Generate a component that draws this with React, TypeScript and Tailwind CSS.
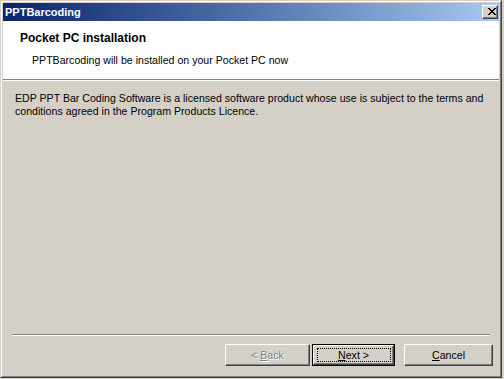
import React from "react";

const CloseGlyph = () => (
  <svg width="8" height="7" viewBox="0 0 8 7" shapeRendering="crispEdges">
    <g fill="#000">
      <rect x="0" y="0" width="2" height="1" />
      <rect x="6" y="0" width="2" height="1" />
      <rect x="1" y="1" width="2" height="1" />
      <rect x="5" y="1" width="2" height="1" />
      <rect x="2" y="2" width="4" height="1" />
      <rect x="3" y="3" width="2" height="1" />
      <rect x="2" y="4" width="4" height="1" />
      <rect x="1" y="5" width="2" height="1" />
      <rect x="5" y="5" width="2" height="1" />
      <rect x="0" y="6" width="2" height="1" />
      <rect x="6" y="6" width="2" height="1" />
    </g>
  </svg>
);

type BtnProps = {
  children: React.ReactNode;
  width: string;
  isDefault?: boolean;
  disabled?: boolean;
};

const Button = ({ children, width, isDefault, disabled }: BtnProps) => {
  const face = (
    <div className="flex-1 flex items-center justify-center border border-t-white border-l-white border-r-[#404040] border-b-[#404040] shadow-[inset_-1px_-1px_0_#808080] bg-[#d4d0c8]">
      <span
        className={`text-[10.6px] leading-[13px] ${
          disabled ? "text-[#808080] [text-shadow:1px_1px_0_#fff]" : "text-black"
        }`}
      >
        {children}
      </span>
    </div>
  );

  if (isDefault) {
    return (
      <div className={`${width} h-[22px] flex border border-black`}>
        <div className="flex-1 flex relative">
          {face}
          <div className="absolute left-[4px] right-[3px] top-[3px] bottom-[3px] border border-dotted border-black" />
        </div>
      </div>
    );
  }

  return <div className={`${width} h-[22px] flex`}>{face}</div>;
};

const App = () => {
  return (
    <div className="w-[504px] h-[379px] bg-[#d4d0c8] font-[family-name:Liberation_Sans,Arial,sans-serif]">
      <div className="w-[502px] h-[378px] border border-t-[#d4d0c8] border-l-[#d4d0c8] border-r-[#404040] border-b-[#404040]">
        <div className="h-full flex flex-col p-px border border-t-white border-l-white border-r-[#808080] border-b-[#808080]">
          {/* caption */}
          <div className="h-[18px] flex items-center justify-between pl-[2px] pr-px bg-linear-to-r from-[#0a246a] to-[#a6caf0]">
            <span className="text-white font-bold text-[11px] leading-[13px]">PPTBarcoding</span>
            <div className="w-[16px] h-[14px] flex items-start pl-[5px] pt-[2px] bg-[#d4d0c8] border border-t-white border-l-white border-r-[#404040] border-b-[#404040] shadow-[inset_-1px_-1px_0_#808080]">
              <CloseGlyph />
            </div>
          </div>

          {/* header */}
          <div className="h-[58px] bg-white pt-[10px]">
            <p className="pl-[17px] font-bold text-[12px] leading-[14px] text-black">
              Pocket PC installation
            </p>
            <p className="pl-[29px] mt-[9px] text-[10.6px] leading-[13px] text-black">
              PPTBarcoding will be installed on your Pocket PC now
            </p>
          </div>
          <div className="h-px bg-[#808080]" />
          <div className="h-px bg-white" />

          {/* body */}
          <div className="flex-1 pt-[11px] pl-[12px] text-[10.6px] leading-[13px] text-black whitespace-nowrap">
            EDP PPT Bar Coding Software is a licensed software product whose use is subject to the terms and
            <br />
            conditions agreed in the Program Products Licence.
          </div>

          {/* footer */}
          <div className="mx-[9px] h-px bg-[#808080]" />
          <div className="mx-[9px] h-px bg-white" />
          <div className="mt-[8px] mb-[9px] flex justify-end pr-[6px]">
            <Button width="w-[85px]" disabled>
              &lt; <span className="underline underline-offset-[1px]">B</span>ack
            </Button>
            <div className="w-[2px]" />
            <Button width="w-[83px]" isDefault>
              <span className="underline underline-offset-[1px]">N</span>ext &gt;
            </Button>
            <div className="w-[9px]" />
            <Button width="w-[89px]">
              <span className="underline underline-offset-[1px]">C</span>ancel
            </Button>
          </div>
        </div>
      </div>
    </div>
  );
};

export default App;
